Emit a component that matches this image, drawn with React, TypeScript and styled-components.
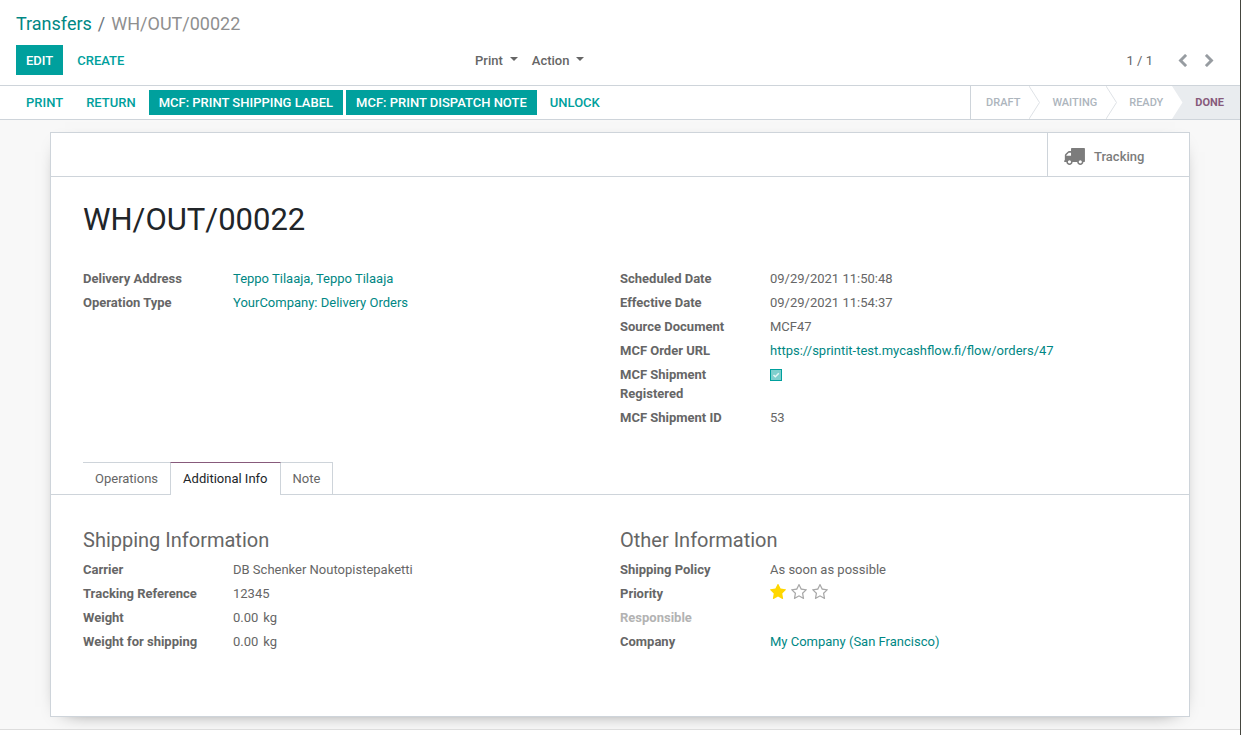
import React, { useState } from "react";
import styled, { createGlobalStyle } from "styled-components";

const GlobalStyle = createGlobalStyle`
  *, *::before, *::after { box-sizing: border-box; }
  body {
    margin: 0;
    background: #fff;
    color: #666;
    font: 400 13px/19px Roboto, "Liberation Sans", sans-serif;
  }
  button {
    margin: 0;
    padding: 0;
    border: 0;
    background: none;
    color: inherit;
    font: inherit;
    cursor: pointer;
  }
  h1, h2, dl, dd, ol { margin: 0; padding: 0; font-weight: 400; }
  svg { display: block; flex: none; }
`;

const Page = styled.div`
  display: flex;
  flex-direction: column;
  min-height: 100vh;
  border-right: 1px solid #45463f;
`;

const Link = styled.a`
  color: #008784;
  text-decoration: none;
`;

const ControlPanel = styled.header`
  padding: 10px 16px;
  border-bottom: 1px solid #ced4da;
`;

const Breadcrumb = styled.ol`
  display: flex;
  gap: 6px;
  list-style: none;
  font-size: 18px;
  line-height: 27px;
`;

const Crumb = styled.li<{ $current?: boolean }>`
  color: ${(p) => (p.$current ? "#8f8f8f" : "#6c757d")};
`;

const ControlRow = styled.div`
  display: grid;
  grid-template-columns: 38% 1fr auto;
  align-items: center;
  margin-top: 8px;
`;

const Group = styled.div<{ $gap: number }>`
  display: flex;
  align-items: center;
  gap: ${(p) => p.$gap}px;
`;

const Button = styled.button<{ $primary?: boolean; $tall?: boolean }>`
  height: ${(p) => (p.$tall ? 30 : 25)}px;
  padding: 0 10px;
  background: ${(p) => (p.$primary ? "#00a09d" : "transparent")};
  color: ${(p) => (p.$primary ? "#fff" : "#00a09d")};
  font-weight: 500;
  text-transform: uppercase;
  white-space: nowrap;
`;

const MenuButton = styled.button`
  display: flex;
  align-items: center;
  gap: 7px;
  font-weight: 500;
`;

const Caret = styled.span`
  margin-bottom: 2px;
  border: 4px solid transparent;
  border-top-color: currentColor;
  border-bottom: 0;
`;

const Pager = styled.nav`
  display: flex;
  align-items: center;
  gap: 16px;
  padding-right: 9px;
`;

const PagerCount = styled.span`
  margin-right: 8px;
`;

const PagerButton = styled.button`
  padding: 2px 1px;
  color: #979ca1;
`;

const StatusBar = styled.div`
  display: flex;
  justify-content: space-between;
  align-items: center;
  height: 34px;
  padding-left: 16px;
  border-bottom: 1px solid #ced4da;
`;

const Steps = styled.ol`
  display: flex;
  align-self: stretch;
  border-left: 1px solid #ced4da;
  padding-left: 3px;
  list-style: none;
`;

const Step = styled.li<{ $active?: boolean }>`
  display: flex;
  align-items: center;
  gap: 9px;
  padding-left: 12px;
  padding-right: ${(p) => (p.$active ? 16 : 0)}px;
  background: ${(p) => (p.$active ? "#e9ecef" : "#fff")};
  color: ${(p) => (p.$active ? "#875a7b" : "#adb5bd")};
  font-size: 11px;
  font-weight: ${(p) => (p.$active ? 700 : 500)};
  text-transform: uppercase;
`;

const Content = styled.main`
  flex: 1;
  padding: 12px 16px;
  background: #f8f8f8;
`;

const Footer = styled.footer`
  height: 6px;
  border-top: 1px solid #ddd;
  background: #fff;
`;

const Sheet = styled.article`
  max-width: 1140px;
  margin: 0 auto;
  padding-bottom: 65px;
  border: 1px solid #ced4da;
  background: #fff;
  box-shadow: 0 5px 20px -15px #000;
`;

const ButtonBox = styled.div`
  display: flex;
  justify-content: flex-end;
  height: 44px;
  border-bottom: 1px solid #ced4da;
`;

const StatButton = styled.button`
  display: flex;
  align-items: center;
  gap: 9px;
  width: 142px;
  padding: 4px 16px 0;
  border-left: 1px solid #ced4da;
  color: #7c7c7c;
  font-weight: 500;
`;

const Title = styled.h1`
  padding: 24px 32px 0;
  color: #212529;
  font-size: 31px;
  line-height: 37px;
`;

const Columns = styled.div`
  display: grid;
  grid-template-columns: 1fr 1fr;
  padding: 31px 32px 0;
`;

const Fields = styled.dl`
  display: grid;
  grid-template-columns: 118px 1fr;
  column-gap: 32px;
  row-gap: 5px;
  align-content: start;
`;

const FieldName = styled.dt<{ $muted?: boolean }>`
  color: ${(p) => (p.$muted ? "#b3b3b3" : "#666")};
  font-weight: 700;
`;

const SectionTitle = styled.h2`
  margin-bottom: 6px;
  font-size: 20px;
  line-height: 28px;
`;

const Tabs = styled.div`
  display: flex;
  margin-top: 35px;
  padding: 0 32px;
  border-bottom: 1px solid #ced4da;
`;

const Tab = styled.button<{ $active?: boolean; $last?: boolean }>`
  height: ${(p) => (p.$active ? 33 : 32)}px;
  margin-bottom: ${(p) => (p.$active ? -1 : 0)}px;
  padding: 0 12px ${(p) => (p.$active ? 1 : 0)}px;
  border: 0 solid #ced4da;
  border-top: 1px solid ${(p) => (p.$active ? "#875a7b" : "#ced4da")};
  border-left-width: ${(p) => (p.$active ? 1 : 0)}px;
  border-right-width: ${(p) => (p.$active || p.$last ? 1 : 0)}px;
  background: #fff;
  color: ${(p) => (p.$active ? "#212529" : "#666")};
`;

const CheckWrap = styled.span`
  position: relative;
  display: inline-grid;
  margin-top: 4px;

  svg {
    position: absolute;
    inset: 2px;
    pointer-events: none;
  }
`;

const CheckInput = styled.input`
  appearance: none;
  width: 12px;
  height: 12px;
  margin: 0;
  border: 1px solid #00a09d;
  background: #7fcfce;
`;

const Stars = styled.div`
  display: flex;
  gap: 5px;
`;

const StarButton = styled.button<{ $on: boolean }>`
  color: ${(p) => (p.$on ? "#ffd700" : "#a8a8a8")};
`;

const starFull =
  "M1728 647q0 22-26 48l-363 354 86 500q1 7 1 20 0 21-10.5 35.5t-30.5 14.5q-19 0-40-12l-449-236-449 236q-22 12-40 12-21 0-31.5-14.5t-10.5-35.5q0-6 2-20l86-500-364-354q-25-27-25-48 0-37 56-46l502-73 225-455q19-41 49-41t49 41l225 455 502 73q56 9 56 46z";
const starEmpty =
  "M1201 1004l306-297-422-62-189-382-189 382-422 62 306 297-73 421 378-199 377 199zm527-357q0 22-26 48l-363 354 86 500q1 7 1 20 0 50-41 50-19 0-40-12l-449-236-449 236q-22 12-40 12-21 0-31.5-14.5t-10.5-35.5q0-6 2-20l86-500-364-354q-25-27-25-48 0-37 56-46l502-73 225-455q19-41 49-41t49 41l225 455 502 73q56 9 56 46z";
const chevronLeft =
  "M1427 301l-531 531 531 531q19 19 19 45t-19 45l-166 166q-19 19-45 19t-45-19l-742-742q-19-19-19-45t19-45l742-742q19-19 45-19t45 19l166 166q19 19 19 45t-19 45z";
const chevronRight =
  "M1363 877l-742 742q-19 19-45 19t-45-19l-166-166q-19-19-19-45t19-45l531-531-531-531q-19-19-19-45t19-45l166-166q19-19 45-19t45 19l742 742q19 19 19 45t-19 45z";
const truck =
  "M640 1408q0-52-38-90t-90-38-90 38-38 90 38 90 90 38 90-38 38-90zm-384-512h384v-256h-158q-13 0-22 9l-195 195q-9 9-9 22v30zm1280 512q0-52-38-90t-90-38-90 38-38 90 38 90 90 38 90-38 38-90zm256-1088v1024q0 15-4 26.5t-13.5 18.5-16.5 11.5-23.5 6-22.5 2-25.5 0-22.5-.5q0 106-75 181t-181 75-181-75-75-181h-384q0 106-75 181t-181 75-181-75-75-181h-64q-3 0-22.5.5t-25.5 0-22.5-2-23.5-6-16.5-11.5-13.5-18.5-4-26.5q0-26 19-45t45-19v-320q0-8-.5-35t0-38 2.5-34.5 6.5-37 14-30.5 22.5-30l198-198q19-19 50.5-32t58.5-13h160v-192q0-26 19-45t45-19h1024q26 0 45 19t19 45z";

type IconProps = { d: string; box: string; width: number; height: number };

const Icon = ({ d, box, width, height }: IconProps) => (
  <svg width={width} height={height} viewBox={box} fill="currentColor" aria-hidden="true">
    <path d={d} />
  </svg>
);

const StepArrow = ({ next }: { next?: boolean }) => (
  <svg width="11" height="33" viewBox="0 0 11 33" aria-hidden="true">
    {next && <path d="M0 0 L10.500 16.500 L0 33 H11 V0 Z" fill="#e9ecef" />}
    {!next && <path d="M0 0 L10.500 16.500 L0 33" fill="none" stroke="#dee2e6" />}
  </svg>
);

const steps = ["Draft", "Waiting", "Ready", "Done"];
const tabs = ["Operations", "Additional Info", "Note"];

type FieldProps = { name: string; muted?: boolean; htmlFor?: string; children?: React.ReactNode };

const Field = ({ name, muted, htmlFor, children }: FieldProps) => (
  <>
    <FieldName $muted={muted}>{htmlFor ? <label htmlFor={htmlFor}>{name}</label> : name}</FieldName>
    <dd>{children}</dd>
  </>
);

export default function App() {
  const [tab, setTab] = useState("Additional Info");
  const [priority, setPriority] = useState(1);
  const [registered, setRegistered] = useState(true);

  return (
    <>
      <GlobalStyle />
      <Page>
        <ControlPanel>
          <Breadcrumb>
            <Crumb><Link href="#transfers">Transfers</Link></Crumb>
            <Crumb aria-hidden="true">/</Crumb>
            <Crumb $current>WH/OUT/00022</Crumb>
          </Breadcrumb>
          <ControlRow>
            <Group $gap={4}>
              <Button $primary $tall>Edit</Button>
              <Button $tall>Create</Button>
            </Group>
            <Group $gap={14}>
              <MenuButton>Print<Caret /></MenuButton>
              <MenuButton>Action<Caret /></MenuButton>
            </Group>
            <Pager aria-label="Pager">
              <PagerCount>1 / 1</PagerCount>
              <PagerButton aria-label="Previous">
                <Icon d={chevronLeft} box="346 26 1100 1612" width={9} height={13} />
              </PagerButton>
              <PagerButton aria-label="Next">
                <Icon d={chevronRight} box="346 26 1100 1612" width={9} height={13} />
              </PagerButton>
            </Pager>
          </ControlRow>
        </ControlPanel>

        <StatusBar>
          <Group $gap={3}>
            <Button>Print</Button>
            <Button>Return</Button>
            <Button $primary>MCF: Print Shipping Label</Button>
            <Button $primary>MCF: Print Dispatch Note</Button>
            <Button>Unlock</Button>
          </Group>
          <Steps>
            {steps.map((step, i) => (
              <Step key={step} $active={step === "Done"}>
                {step}
                {i < steps.length - 1 && <StepArrow next={steps[i + 1] === "Done"} />}
              </Step>
            ))}
          </Steps>
        </StatusBar>

        <Content>
          <Sheet>
            <ButtonBox>
              <StatButton>
                <Icon d={truck} box="64 256 1728 1408" width={21} height={17} />
                Tracking
              </StatButton>
            </ButtonBox>
            <Title>WH/OUT/00022</Title>
            <Columns>
              <Fields>
                <Field name="Delivery Address"><Link href="#partner">Teppo Tilaaja, Teppo Tilaaja</Link></Field>
                <Field name="Operation Type"><Link href="#type">YourCompany: Delivery Orders</Link></Field>
              </Fields>
              <Fields>
                <Field name="Scheduled Date">09/29/2021 11:50:48</Field>
                <Field name="Effective Date">09/29/2021 11:54:37</Field>
                <Field name="Source Document">MCF47</Field>
                <Field name="MCF Order URL">
                  <Link href="#order">https://sprintit-test.mycashflow.fi/flow/orders/47</Link>
                </Field>
                <Field name="MCF Shipment Registered" htmlFor="registered">
                  <CheckWrap>
                    <CheckInput
                      id="registered"
                      type="checkbox"
                      checked={registered}
                      onChange={(e) => setRegistered(e.target.checked)}
                    />
                    {registered && (
                      <svg width="8" height="8" viewBox="0 0 8 8" fill="none" stroke="#e4f6f5" strokeWidth="1.500">
                        <path d="M1.500 4 L3.300 5.800 L6.800 2.200" />
                      </svg>
                    )}
                  </CheckWrap>
                </Field>
                <Field name="MCF Shipment ID">53</Field>
              </Fields>
            </Columns>

            <Tabs role="tablist">
              {tabs.map((name, i) => (
                <Tab
                  key={name}
                  role="tab"
                  aria-selected={tab === name}
                  $active={tab === name}
                  $last={i === tabs.length - 1}
                  onClick={() => setTab(name)}
                >
                  {name}
                </Tab>
              ))}
            </Tabs>

            <Columns>
              <section>
                <SectionTitle>Shipping Information</SectionTitle>
                <Fields>
                  <Field name="Carrier">DB Schenker Noutopistepaketti</Field>
                  <Field name="Tracking Reference">12345</Field>
                  <Field name="Weight"><Group $gap={5}><span>0.00</span><span>kg</span></Group></Field>
                  <Field name="Weight for shipping"><Group $gap={5}><span>0.00</span><span>kg</span></Group></Field>
                </Fields>
              </section>
              <section>
                <SectionTitle>Other Information</SectionTitle>
                <Fields>
                  <Field name="Shipping Policy">As soon as possible</Field>
                  <Field name="Priority">
                    <Stars>
                      {[1, 2, 3].map((n) => (
                        <StarButton
                          key={n}
                          aria-label={`Priority ${n}`}
                          $on={n <= priority}
                          onClick={() => setPriority(n)}
                        >
                          <Icon d={n <= priority ? starFull : starEmpty} box="64 60 1664 1664" width={16} height={16} />
                        </StarButton>
                      ))}
                    </Stars>
                  </Field>
                  <Field name="Responsible" muted />
                  <Field name="Company"><Link href="#company">My Company (San Francisco)</Link></Field>
                </Fields>
              </section>
            </Columns>
          </Sheet>
        </Content>
        <Footer />
      </Page>
    </>
  );
}
